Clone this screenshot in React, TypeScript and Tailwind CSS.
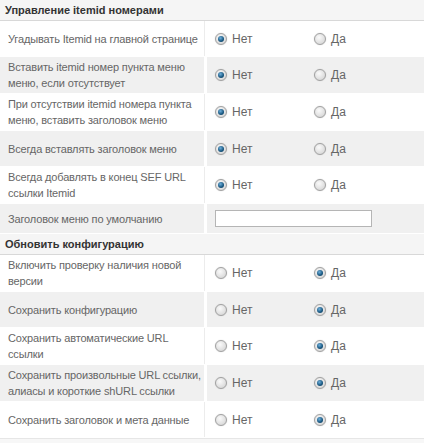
import React from "react"

type Row = {
	label: string[]
	value: "no" | "yes" | "input"
}

const sections: { title: string; rows: Row[] }[] = [
	{
		title: "Управление itemid номерами",
		rows: [
			{ label: ["Угадывать Itemid на главной странице"], value: "no" },
			{ label: ["Вставить itemid номер пункта меню", "меню, если отсутствует"], value: "no" },
			{ label: ["При отсутствии itemid номера пункта", "меню, вставить заголовок меню"], value: "no" },
			{ label: ["Всегда вставлять заголовок меню"], value: "no" },
			{ label: ["Всегда добавлять в конец SEF URL", "ссылки Itemid"], value: "no" },
			{ label: ["Заголовок меню по умолчанию"], value: "input" },
		],
	},
	{
		title: "Обновить конфигурацию",
		rows: [
			{ label: ["Включить проверку наличия новой", "версии"], value: "yes" },
			{ label: ["Сохранить конфигурацию"], value: "yes" },
			{ label: ["Сохранить автоматические URL", "ссылки"], value: "yes" },
			{ label: ["Сохранить произвольные URL ссылки,", "алиасы и короткие shURL ссылки"], value: "yes" },
			{ label: ["Сохранить заголовок и мета данные"], value: "yes" },
		],
	},
]

function Radio({ checked, text }: { checked: boolean; text: string }) {
	return (
		<span className="flex items-center gap-[5px]">
			<span className="flex h-[12px] w-[12px] items-center justify-center rounded-full border border-[#a0a0a0] bg-[radial-gradient(circle_at_40%_35%,#fafafa,#cfcfcf)] shadow-[0_0_1px_#bbb]">
				{checked && <span className="h-[6px] w-[6px] rounded-full bg-[radial-gradient(circle_at_40%_35%,#6fb0dc,#17557e_60%,#0d3a5a)]" />}
			</span>
			<span className="text-[12px] text-[#666]">{text}</span>
		</span>
	)
}

function ParamRow({ row, gray }: { row: Row; gray: boolean }) {
	const bg = gray ? "bg-[#f0f0f0]" : "bg-white"
	const isInput = row.value === "input"
	return (
		<div className={`flex border-b border-white bg-white ${isInput ? "min-h-[30px]" : "min-h-[36px]"}`}>
			<div className={`flex w-[204px] shrink-0 flex-col justify-center whitespace-nowrap px-[8px] py-[2px] text-[11px] leading-[16px] tracking-[-0.15px] text-[#666] ${bg}`}>
				{row.label.map((l) => (
					<span key={l}>{l}</span>
				))}
			</div>
			<div className={gray ? "w-[3px] bg-white" : "w-[3px] border-l border-[#ececec] bg-white"} />
			<div className={`flex flex-1 items-center pl-[8px] ${bg}`}>
				{isInput ? (
					<div className="h-[17px] w-[157px] border border-[#b5b5b5] bg-white" />
				) : (
					<>
						<span className="w-[99px]">
							<Radio checked={row.value === "no"} text="Нет" />
						</span>
						<Radio checked={row.value === "yes"} text="Да" />
					</>
				)}
			</div>
		</div>
	)
}

export default function App() {
	return (
		<div className="h-[443px] w-[424px] overflow-hidden bg-white font-['Liberation_Sans',Arial,sans-serif]">
			{sections.map((s) => (
				<section key={s.title}>
					<header className="flex h-[21px] items-center border-b border-[#d8d8d8] bg-[#f5f5f5] px-[5px] text-[11px] font-bold text-[#333]">
						{s.title}
					</header>
					{s.rows.map((r, i) => (
						<ParamRow key={i} row={r} gray={i % 2 === 1} />
					))}
				</section>
			))}
			<div className="h-[8px] border-t border-[#e6e6e6] bg-[#f7f7f7]" />
		</div>
	)
}
